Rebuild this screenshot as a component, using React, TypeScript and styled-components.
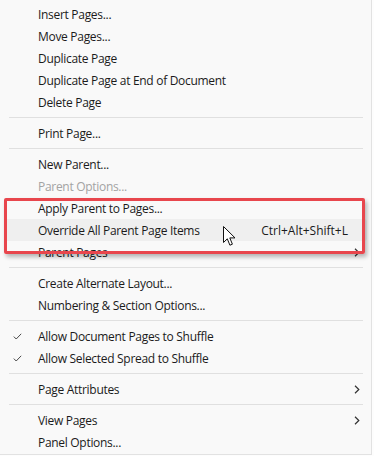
import React from 'react';
import styled, { createGlobalStyle } from 'styled-components';

type Entry =
  | { kind: 'sep' }
  | {
      kind: 'item';
      label: string;
      shortcut?: string;
      checked?: boolean;
      disabled?: boolean;
      submenu?: boolean;
      hover?: boolean;
    };

const ENTRIES: Entry[] = [
  { kind: 'item', label: 'Insert Pages...' },
  { kind: 'item', label: 'Move Pages...' },
  { kind: 'item', label: 'Duplicate Page' },
  { kind: 'item', label: 'Duplicate Page at End of Document' },
  { kind: 'item', label: 'Delete Page' },
  { kind: 'sep' },
  { kind: 'item', label: 'Print Page...' },
  { kind: 'sep' },
  { kind: 'item', label: 'New Parent...' },
  { kind: 'item', label: 'Parent Options...', disabled: true },
  { kind: 'item', label: 'Apply Parent to Pages...' },
  { kind: 'item', label: 'Override All Parent Page Items', shortcut: 'Ctrl+Alt+Shift+L', hover: true },
  { kind: 'item', label: 'Parent Pages', submenu: true },
  { kind: 'sep' },
  { kind: 'item', label: 'Create Alternate Layout...' },
  { kind: 'item', label: 'Numbering & Section Options...' },
  { kind: 'sep' },
  { kind: 'item', label: 'Allow Document Pages to Shuffle', checked: true },
  { kind: 'item', label: 'Allow Selected Spread to Shuffle', checked: true },
  { kind: 'sep' },
  { kind: 'item', label: 'Page Attributes', submenu: true },
  { kind: 'sep' },
  { kind: 'item', label: 'View Pages', submenu: true },
  { kind: 'item', label: 'Panel Options...' },
];

function CheckIcon() {
  return (
    <svg width="9" height="7" viewBox="0 0 9 7">
      <path d="M0.8 3.6 L3.2 6 L8.2 0.8" fill="none" stroke="#4a4a4a" strokeWidth="1" />
    </svg>
  );
}

function ChevronIcon() {
  return (
    <svg width="6" height="9" viewBox="0 0 6 9">
      <path d="M1 0.8 L4.8 4.5 L1 8.2" fill="none" stroke="#333" strokeWidth="1.2" />
    </svg>
  );
}

function PointerIcon() {
  return (
    <svg width="13" height="21" viewBox="0 0 13 21">
      <path
        d="M0.5 0.5 L0.5 16.5 L4.3 12.8 L6.9 19.2 L9.4 18.2 L6.8 11.9 L12 11.9 Z"
        fill="#fff"
        stroke="#111"
        strokeWidth="1"
        strokeLinejoin="round"
      />
    </svg>
  );
}

export default function App() {
  return (
    <>
      <GlobalStyle />
      <Menu>
        {ENTRIES.map((entry, index) =>
          entry.kind === 'sep' ? (
            <Separator key={index} />
          ) : (
            <Item key={index} $hover={entry.hover} $disabled={entry.disabled}>
              <Check>{entry.checked && <CheckIcon />}</Check>
              <Label>{entry.label}</Label>
              <Shortcut>{entry.shortcut}</Shortcut>
              <Arrow>{entry.submenu && <ChevronIcon />}</Arrow>
            </Item>
          )
        )}
        <Highlight />
        <Pointer>
          <PointerIcon />
        </Pointer>
      </Menu>
    </>
  );
}

const GlobalStyle = createGlobalStyle`
  body {
    margin: 0;
    background: #fdfdfd;
    font-family: 'Open Sans', 'Noto Sans', sans-serif;
  }
`;

const Menu = styled.div`
  position: relative;
  width: 371px;
  padding: 3px 0 1px;
  background: #f9f9f9;
  border-right: 1px solid #e2e2e2;
  border-bottom: 1px solid #e2e2e2;
  border-top: 1px solid #ececec;
  margin-top: -1px;
`;

const Item = styled.div<{ $hover?: boolean; $disabled?: boolean }>`
  display: grid;
  grid-template-columns: 34px 1fr auto 19px;
  align-items: center;
  height: 22px;
  margin: 0 4px;
  border-radius: 3px;
  font-size: 12px;
  letter-spacing: -0.3px;
  color: ${(p) => (p.$disabled ? '#a3a3a3' : '#1b1b1b')};
  background: ${(p) => (p.$hover ? '#efefef' : 'transparent')};
`;

const Check = styled.span`
  display: flex;
  justify-content: flex-start;
  padding-left: 9px;
`;

const Label = styled.span`
  white-space: nowrap;
`;

const Shortcut = styled.span`
  white-space: nowrap;
  letter-spacing: 0;
`;

const Arrow = styled.span`
  display: flex;
  padding-left: 6px;
`;

const Separator = styled.div`
  height: 1px;
  margin: 4px 8px 4px 9px;
  background: #e0e0e0;
`;

const Highlight = styled.div`
  position: absolute;
  left: 4px;
  top: 198px;
  width: 355px;
  height: 50px;
  border: 3px solid #e8464d;
  border-radius: 2px;
  box-shadow: 2px 3px 4px rgba(0, 0, 0, 0.28);
`;

const Pointer = styled.div`
  position: absolute;
  left: 223px;
  top: 226px;
  line-height: 0;
`;
